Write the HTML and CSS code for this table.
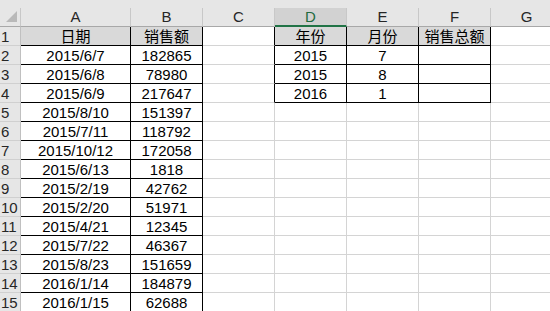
FILE: index.html
```html
<!DOCTYPE html>
<html lang="zh-CN">
<head>
<meta charset="utf-8">
<title>Sheet</title>
<link rel="stylesheet" href="styles.css">
</head>
<body>
<div class="top-strip"></div>
<div class="sheet">
  <div class="corner"><svg width="20" height="18" viewBox="0 0 20 18"><polygon points="17,3 17,14 6,14" fill="#b9b9b9"/></svg></div>
  <div class="ch">A</div>
  <div class="ch">B</div>
  <div class="ch">C</div>
  <div class="ch ch-active">D</div>
  <div class="ch">E</div>
  <div class="ch">F</div>
  <div class="ch">G</div>

  <div class="rh">1</div>
  <div class="c b fill cjk">日期</div>
  <div class="c b fill cjk">销售额</div>
  <div class="c br"></div>
  <div class="c b fill cjk">年份</div>
  <div class="c b fill cjk">月份</div>
  <div class="c b fill cjk">销售总额</div>
  <div class="c"></div>

  <div class="rh">2</div>
  <div class="c b">2015/6/7</div>
  <div class="c b">182865</div>
  <div class="c br"></div>
  <div class="c b">2015</div>
  <div class="c b">7</div>
  <div class="c b"></div>
  <div class="c"></div>

  <div class="rh">3</div>
  <div class="c b">2015/6/8</div>
  <div class="c b">78980</div>
  <div class="c br"></div>
  <div class="c b">2015</div>
  <div class="c b">8</div>
  <div class="c b"></div>
  <div class="c"></div>

  <div class="rh">4</div>
  <div class="c b">2015/6/9</div>
  <div class="c b">217647</div>
  <div class="c br"></div>
  <div class="c b">2016</div>
  <div class="c b">1</div>
  <div class="c b"></div>
  <div class="c"></div>

  <div class="rh">5</div>
  <div class="c b">2015/8/10</div>
  <div class="c b">151397</div>
  <div class="c"></div><div class="c"></div><div class="c"></div><div class="c"></div><div class="c"></div>

  <div class="rh">6</div>
  <div class="c b">2015/7/11</div>
  <div class="c b">118792</div>
  <div class="c"></div><div class="c"></div><div class="c"></div><div class="c"></div><div class="c"></div>

  <div class="rh">7</div>
  <div class="c b">2015/10/12</div>
  <div class="c b">172058</div>
  <div class="c"></div><div class="c"></div><div class="c"></div><div class="c"></div><div class="c"></div>

  <div class="rh">8</div>
  <div class="c b">2015/6/13</div>
  <div class="c b">1818</div>
  <div class="c"></div><div class="c"></div><div class="c"></div><div class="c"></div><div class="c"></div>

  <div class="rh">9</div>
  <div class="c b">2015/2/19</div>
  <div class="c b">42762</div>
  <div class="c"></div><div class="c"></div><div class="c"></div><div class="c"></div><div class="c"></div>

  <div class="rh">10</div>
  <div class="c b">2015/2/20</div>
  <div class="c b">51971</div>
  <div class="c"></div><div class="c"></div><div class="c"></div><div class="c"></div><div class="c"></div>

  <div class="rh">11</div>
  <div class="c b">2015/4/21</div>
  <div class="c b">12345</div>
  <div class="c"></div><div class="c"></div><div class="c"></div><div class="c"></div><div class="c"></div>

  <div class="rh">12</div>
  <div class="c b">2015/7/22</div>
  <div class="c b">46367</div>
  <div class="c"></div><div class="c"></div><div class="c"></div><div class="c"></div><div class="c"></div>

  <div class="rh">13</div>
  <div class="c b">2015/8/23</div>
  <div class="c b">151659</div>
  <div class="c"></div><div class="c"></div><div class="c"></div><div class="c"></div><div class="c"></div>

  <div class="rh">14</div>
  <div class="c b">2016/1/14</div>
  <div class="c b">184879</div>
  <div class="c"></div><div class="c"></div><div class="c"></div><div class="c"></div><div class="c"></div>

  <div class="rh">15</div>
  <div class="c b">2016/1/15</div>
  <div class="c b">62688</div>
  <div class="c"></div><div class="c"></div><div class="c"></div><div class="c"></div><div class="c"></div>
</div>
</body>
</html>
```

FILE: styles.css
```css
* { box-sizing: border-box; }

html, body {
  margin: 0;
  padding: 0;
  width: 550px;
  height: 311px;
  overflow: hidden;
  background: #ffffff;
}

body {
  font-family: "Liberation Sans", Arial, "Noto Sans CJK SC", sans-serif;
  font-size: 15px;
  color: #000;
}

.top-strip {
  height: 8px;
  background: #e6e6e6;
}

.sheet {
  display: grid;
  grid-template-columns: 21px 110px repeat(6, 72px);
  grid-auto-rows: 19px;
  width: 563px;
}

.corner {
  background: #e6e6e6;
  border-right: 1px solid #c8c8c8;
  border-bottom: 1px solid #a8a8a8;
  line-height: 0;
}

.ch {
  background: #e6e6e6;
  border-right: 1px solid #c8c8c8;
  border-bottom: 1px solid #a8a8a8;
  text-align: center;
  line-height: 18px;
  color: #262626;
}

.ch-active {
  background: #d2d2d2;
  color: #1e6b40;
  border-bottom: 2px solid #217346;
}

.rh {
  background: #e6e6e6;
  border-right: 1px solid #c0c0c0;
  border-bottom: 1px solid #d0d0d0;
  padding-left: 1px;
  line-height: 19px;
  color: #262626;
}

.c {
  border-right: 1px solid #d4d4d4;
  border-bottom: 1px solid #d4d4d4;
  text-align: center;
  line-height: 19px;
  white-space: nowrap;
}

.c.b {
  border-right: 1px solid #000;
  border-bottom: 1px solid #000;
}

.c.br {
  border-right: 1px solid #000;
}

.fill {
  background: #d9d9d9;
}

.cjk {
  font-family: "Noto Sans CJK SC", sans-serif;
  font-size: 15px;
  line-height: 18px;
}
```
